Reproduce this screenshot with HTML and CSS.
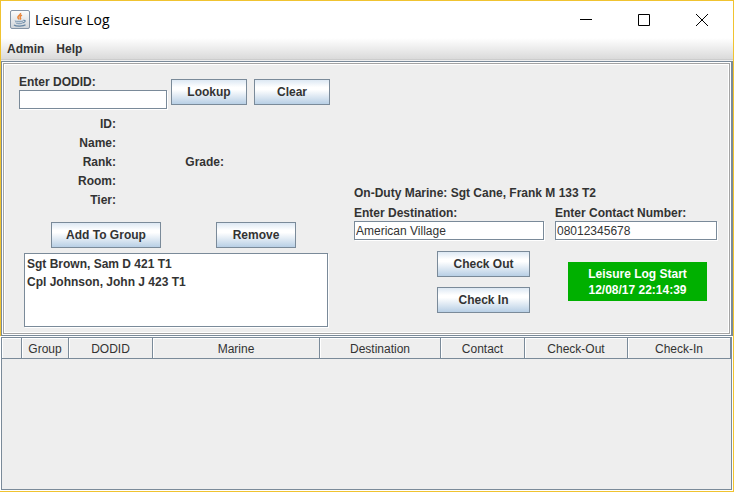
FILE: index.html
```html
<!DOCTYPE html>
<html lang="en">
<head>
<meta charset="utf-8">
<title>Leisure Log</title>
<link rel="stylesheet" href="styles.css">
</head>
<body>
<div class="window">
  <header class="titlebar">
    <svg class="app-icon" viewBox="0 0 20 20" aria-hidden="true">
      <defs>
        <linearGradient id="tile" x1="0" y1="0" x2="0" y2="1">
          <stop offset="0" stop-color="#fdfdfd"/>
          <stop offset="1" stop-color="#cfd4d9"/>
        </linearGradient>
      </defs>
      <rect x=".5" y=".5" width="19" height="18" rx="1.500" fill="url(#tile)" stroke="#8494a6"/>
      <path d="M10.500 3c.8 2-3 2.600-2.600 4.500.2.900 1 1.200 1.200 2M12 5.200c-1.800.9-2.400 1.800-1.500 2.800.4.500.1 1-.4 1.500" fill="none" stroke="#e8853a" stroke-width="1.500"/>
      <path d="M4.500 10.300c1.500.7 7 .7 9 0l-1.300 3.500c-1.200.6-4.700.6-5.900 0z" fill="#8ba3b9"/>
      <path d="M6 12.200c1.500.5 5 .5 6.500 0" fill="none" stroke="#e6ebf0" stroke-width=".7"/>
      <path d="M13.300 10.300c2.700-.4 2.500 2.100-.6 2.500M4 15c2 1.500 9.500 1.400 11.500-.2" fill="none" stroke="#6585a3" stroke-width="1.200"/>
    </svg>
    <h1 class="title">Leisure Log</h1>
    <button class="caption" aria-label="Minimize"><svg viewBox="0 0 12 12"><path d="M0 5.500h12"/></svg></button>
    <button class="caption" aria-label="Maximize"><svg viewBox="0 0 12 12"><path d="M.5.5h11v11H.5z"/></svg></button>
    <button class="caption" aria-label="Close"><svg viewBox="0 0 12 12"><path d="M0 0l12 12M12 0L0 12"/></svg></button>
  </header>
  <nav class="menubar">
    <button class="menu">Admin</button>
    <button class="menu">Help</button>
  </nav>
  <main class="panel">
    <div class="panel-inner">
      <section class="member">
        <div class="lookup">
          <div class="field dodid">
            <label for="dodid">Enter DODID:</label>
            <input id="dodid" type="text">
          </div>
          <button class="btn">Lookup</button>
          <button class="btn clear">Clear</button>
        </div>
        <div class="details">
          <span>ID:</span>
          <span>Name:</span>
          <span>Rank:</span><span class="grade">Grade:</span>
          <span>Room:</span>
          <span>Tier:</span>
        </div>
        <div class="group-actions">
          <button class="btn add">Add To Group</button>
          <button class="btn remove">Remove</button>
        </div>
        <ul class="group">
          <li>Sgt Brown, Sam D 421 T1</li>
          <li>Cpl Johnson, John J 423 T1</li>
        </ul>
      </section>
      <section class="checkout">
        <p class="duty">On-Duty Marine: Sgt Cane, Frank M 133 T2</p>
        <div class="fields">
          <div class="field destination">
            <label for="destination">Enter Destination:</label>
            <input id="destination" type="text" value="American Village">
          </div>
          <div class="field contact">
            <label for="contact">Enter Contact Number:</label>
            <input id="contact" type="text" value="08012345678">
          </div>
        </div>
        <div class="actions">
          <div class="stack">
            <button class="btn check">Check Out</button>
            <button class="btn check">Check In</button>
          </div>
          <div class="status">Leisure Log Start<br>12/08/17 22:14:39</div>
        </div>
      </section>
    </div>
  </main>
  <section class="log">
    <table>
      <colgroup>
        <col class="c-mark"><col class="c-group"><col class="c-dodid"><col class="c-marine"><col class="c-dest"><col class="c-contact"><col class="c-out"><col class="c-in">
      </colgroup>
      <thead>
        <tr><th></th><th>Group</th><th>DODID</th><th>Marine</th><th>Destination</th><th>Contact</th><th>Check-Out</th><th>Check-In</th></tr>
      </thead>
    </table>
  </section>
</div>
</body>
</html>
```
FILE: styles.css
```css
* {
  box-sizing: border-box;
}

body {
  margin: 0;
  font: bold 12px/16px "Liberation Sans", Arial, sans-serif;
  color: #333;
}

button,
input {
  font: inherit;
  color: inherit;
}

.window {
  display: flex;
  flex-direction: column;
  min-height: 100vh;
  border: 1px solid #f0c330;
  background: #eee;
}

.titlebar {
  display: flex;
  align-items: center;
  height: 37px;
  padding: 0 2px 0 9px;
  background: #fff;
}

.app-icon {
  width: 20px;
  height: 20px;
}

.title {
  flex: 1;
  margin: 0 0 0 5px;
  font: 14px/20px "Open Sans", "Noto Sans", sans-serif;
  color: #000;
}

.caption {
  display: flex;
  align-items: center;
  justify-content: center;
  width: 58px;
  height: 36px;
  padding: 0;
  border: 0;
  background: none;
}

.caption svg {
  width: 12px;
  height: 12px;
  fill: none;
  stroke: #000;
}

.menubar {
  display: flex;
  gap: 12px;
  height: 22px;
  padding-left: 6px;
  border-bottom: 1px solid #ccc;
  background: linear-gradient(#fff, #dadada);
}

.menu {
  padding: 0;
  border: 0;
  background: none;
}

.panel {
  margin-top: 1px;
  border: 1px solid #7a8a99;
  border-right-width: 2px;
  padding: 1px;
  background: #fff;
}

.panel-inner {
  display: flex;
  gap: 24px;
  min-height: 271px;
  border: 1px solid #a3a3a3;
  padding: 11px 12px 6px 15px;
  background: #eee;
  box-shadow: inset 0 0 0 1px #fff;
}

.member {
  flex: 311 1 0;
}

.field {
  display: flex;
  flex-direction: column;
  line-height: 15px;
}

.field input {
  width: 100%;
  height: 19px;
  padding: 0 1px;
  border: 1px solid #7a8a99;
  border-radius: 0;
  background: #fff;
  box-shadow: 1px 1px #fff;
  font-weight: normal;
}

.lookup {
  display: flex;
  align-items: flex-start;
}

.dodid {
  flex: 1;
  margin-right: 4px;
}

.btn {
  width: 76px;
  height: 26px;
  padding: 0;
  border: 1px solid #7a8a99;
  background: linear-gradient(#dde8f3, #fff 30%, #fff 40%, #b8cfe5);
}

.lookup .btn {
  margin-top: 4px;
}

.lookup .clear {
  margin-left: 7px;
}

.details {
  display: grid;
  grid-template-columns: 97px 108px;
  grid-auto-rows: 19px;
  align-items: center;
  margin-top: 5px;
  text-align: right;
}

.details span {
  grid-column: 1;
}

.details .grade {
  grid-column: 2;
}

.group-actions {
  display: flex;
  gap: 55px;
  margin: 13px 0 5px 32px;
}

.btn.add {
  width: 110px;
}

.btn.remove {
  width: 80px;
}

.group {
  height: 74px;
  margin: 0 2px 0 5px;
  padding: 1px 2px 0;
  border: 1px solid #7a8a99;
  background: #fff;
  box-shadow: 1px 1px #fff;
  line-height: 18px;
  list-style: none;
}

.checkout {
  flex: 363 1 0;
  padding-top: 110px;
}

.duty {
  margin: 0 0 5px;
}

.fields {
  display: flex;
  gap: 11px;
}

.destination {
  flex: 190 1 0;
}

.contact {
  flex: 162 1 0;
}

.actions {
  display: flex;
  justify-content: flex-end;
  gap: 38px;
  margin: 11px 10px 0 0;
}

.stack {
  display: flex;
  flex-direction: column;
  gap: 10px;
}

.btn.check {
  width: 93px;
}

.status {
  width: 139px;
  height: 39px;
  margin-top: 11px;
  padding-top: 4px;
  background: #00b000;
  color: #fff;
  text-align: center;
}

.log {
  flex: 1;
  margin: 1px 1px 1px 0;
  border: 1px solid #7a8a99;
  box-shadow: 0 0 0 1px #fff;
}

.log table {
  width: 100%;
  table-layout: fixed;
  border-collapse: separate;
  border-spacing: 0;
}

.log th {
  height: 21px;
  padding: 1px 0 0;
  border-right: 1px solid #7a8a99;
  border-bottom: 1px solid #7a8a99;
  box-shadow: inset 1px 1px #fff;
  font-weight: normal;
}

.c-mark { width: 20px; }
.c-group { width: 47px; }
.c-dodid { width: 84px; }
.c-marine { width: 167px; }
.c-dest { width: 121px; }
.c-contact { width: 84px; }
.c-out { width: 103px; }
```
